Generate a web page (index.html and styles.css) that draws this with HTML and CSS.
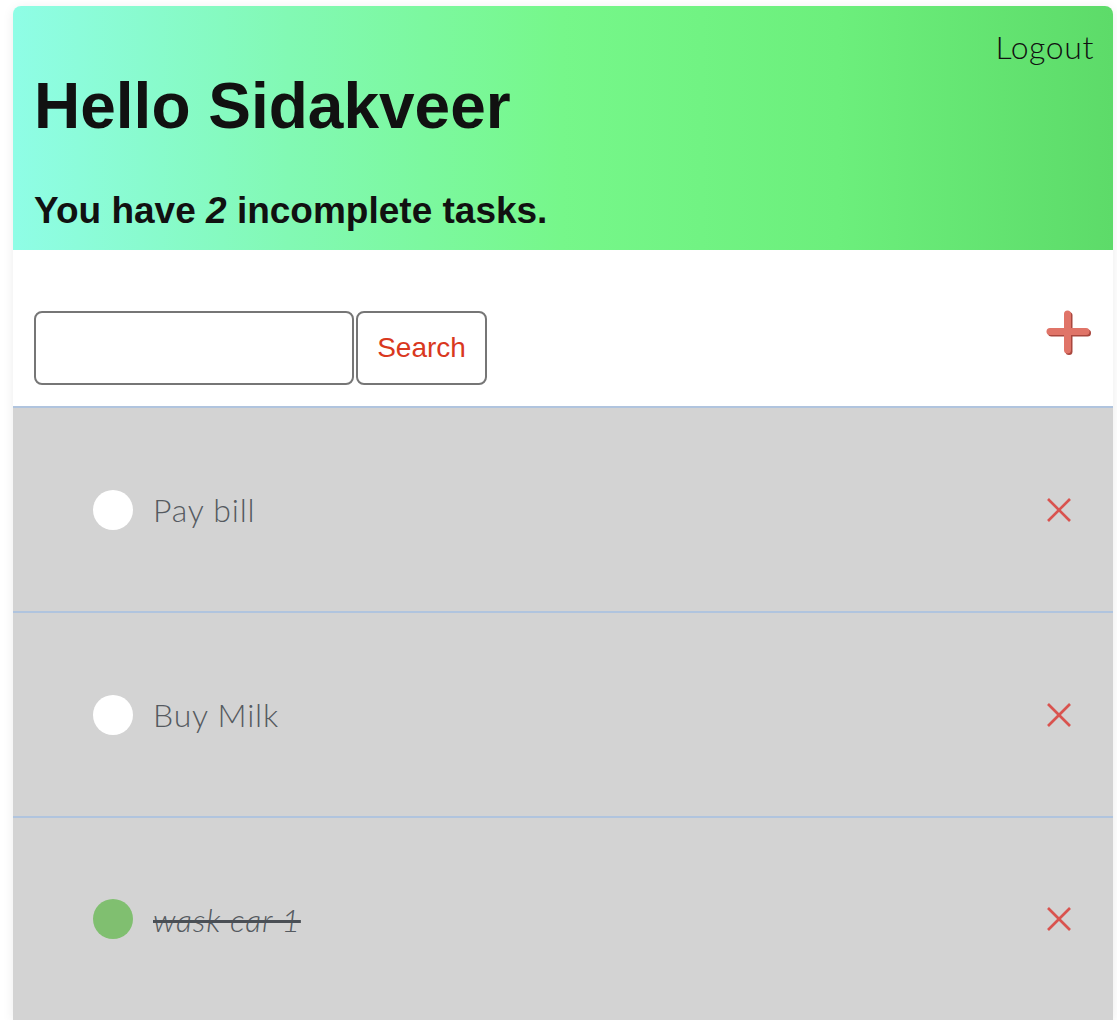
FILE: index.html
```html
<!DOCTYPE html>
<html>
<head>
<meta charset="utf-8">
<link rel="stylesheet" href="styles.css">
</head>
<body>
<div class="card">
  <header class="header">
    <div class="logout">Logout</div>
    <h1 class="hello">Hello Sidakveer</h1>
    <h2 class="count">You have <em>2</em> incomplete tasks.</h2>
  </header>
  <div class="toolbar">
    <form class="search">
      <input class="search-input" type="text">
      <button class="search-btn" type="button">Search</button>
    </form>
    <svg class="add" width="46" height="46" viewBox="0 0 46 46">
      <g stroke="#a9473e" stroke-width="7" stroke-linecap="round">
        <line x1="23" y1="5.5" x2="23" y2="41.5"/>
        <line x1="5.5" y1="23" x2="41.5" y2="23"/>
      </g>
      <g stroke="#e07468" stroke-width="7" stroke-linecap="round">
        <line x1="21.5" y1="4" x2="21.5" y2="40"/>
        <line x1="4" y1="21.5" x2="40" y2="21.5"/>
      </g>
    </svg>
  </div>
  <ul class="tasks">
    <li class="task">
      <span class="check"></span>
      <span class="title">Pay bill</span>
      <svg class="del" width="26" height="26" viewBox="0 0 26 26"><g stroke="#d9534f" stroke-width="2.6"><line x1="2" y1="2" x2="24" y2="24"/><line x1="24" y1="2" x2="2" y2="24"/></g></svg>
    </li>
    <li class="task">
      <span class="check"></span>
      <span class="title">Buy Milk</span>
      <svg class="del" width="26" height="26" viewBox="0 0 26 26"><g stroke="#d9534f" stroke-width="2.6"><line x1="2" y1="2" x2="24" y2="24"/><line x1="24" y1="2" x2="2" y2="24"/></g></svg>
    </li>
    <li class="task last">
      <span class="check done"></span>
      <span class="title done">wask car 1</span>
      <svg class="del" width="26" height="26" viewBox="0 0 26 26"><g stroke="#d9534f" stroke-width="2.6"><line x1="2" y1="2" x2="24" y2="24"/><line x1="24" y1="2" x2="2" y2="24"/></g></svg>
    </li>
  </ul>
</div>
</body>
</html>
```
FILE: styles.css
```css
html, body {
  margin: 0;
  padding: 0;
  background: #ffffff;
}
body {
  padding: 6px 0 0 13px;
  font-family: "Liberation Sans", Arial, sans-serif;
}
.card {
  width: 1100px;
  background: #ffffff;
  border-radius: 8px 8px 0 0;
  box-shadow: 0 2px 12px rgba(0, 0, 0, 0.08);
}
.header {
  position: relative;
  height: 244px;
  box-sizing: border-box;
  padding: 0 0 0 21px;
  border-radius: 8px 8px 0 0;
  background: linear-gradient(to right, #8ffde6 0%, #82f9b4 25%, #76f78a 50%, #6cef7c 75%, #5ddb69 100%);
  color: #111111;
  overflow: hidden;
}
.logout {
  position: absolute;
  top: 23px;
  right: 19px;
  font-family: "Lato", sans-serif;
  font-weight: 300;
  font-size: 32px;
  letter-spacing: 0.6px;
  line-height: 36px;
  color: #111;
}
.hello {
  margin: 0;
  padding-top: 64px;
  font-size: 64px;
  line-height: 72px;
  font-weight: bold;
}
.count {
  margin: 48px 0 0 0;
  font-size: 37px;
  line-height: 42px;
  font-weight: bold;
}
.count em {
  font-style: italic;
}
.toolbar {
  display: flex;
  align-items: flex-start;
  justify-content: space-between;
  height: 156px;
  box-sizing: border-box;
  padding: 61px 21px 0 21px;
}
.search {
  display: flex;
  gap: 2px;
  margin: 0;
}
.search-input {
  width: 320px;
  height: 74px;
  box-sizing: border-box;
  border: 2px solid #767676;
  border-radius: 8px;
  background: #fff;
  margin: 0;
}
.search-btn {
  width: 131px;
  height: 74px;
  box-sizing: border-box;
  border: 2px solid #767676;
  border-radius: 8px;
  background: #fff;
  color: #d9381e;
  font-family: "Liberation Sans", Arial, sans-serif;
  font-size: 28px;
  padding: 0;
  margin: 0;
}
.add {
  display: block;
  margin-top: -1px;
}
.tasks {
  list-style: none;
  margin: 0;
  padding: 0;
  background: #d3d3d3;
}
.task {
  display: flex;
  align-items: center;
  height: 205px;
  box-sizing: border-box;
  border-top: 2px solid #b0c4de;
  padding: 0 41px 0 80px;
}
.task.last {
  height: 204px;
}
.check {
  width: 40px;
  height: 40px;
  border-radius: 50%;
  background: #ffffff;
  flex: none;
}
.check.done {
  background: #80bf70;
}
.title {
  margin-left: 20px;
  flex: 1;
  font-family: "Lato", sans-serif;
  font-weight: 300;
  font-size: 32px;
  letter-spacing: 0.8px;
  color: #555a60;
}
.title.done {
  font-style: italic;
  text-decoration: line-through;
  text-decoration-color: #4a4f55;
  text-decoration-thickness: 3px;
}
.del {
  display: block;
  flex: none;
}
```
